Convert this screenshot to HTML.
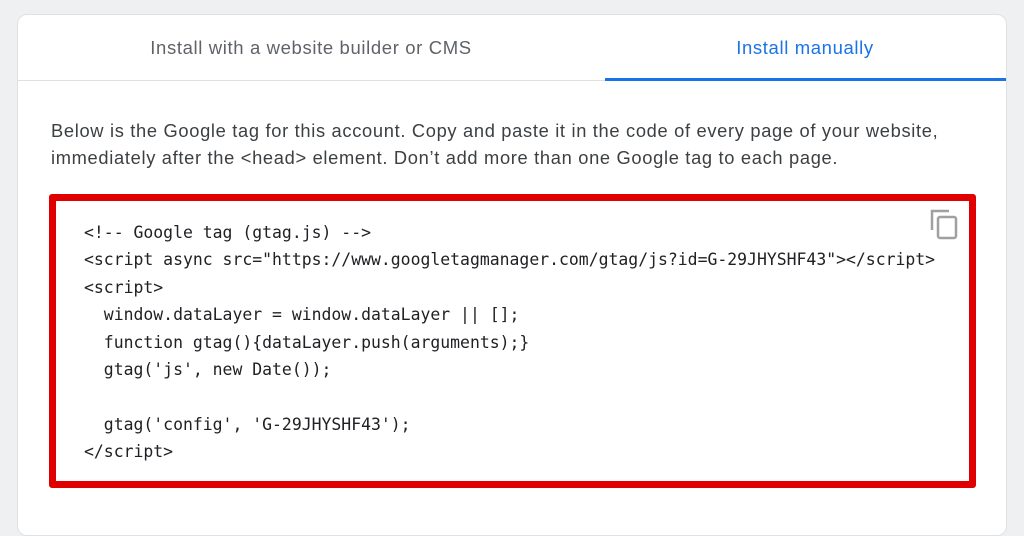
<!DOCTYPE html>
<html><head><style>
body{margin:0;width:1024px;height:507px;background:#eef0f2;font-family:"Liberation Sans",sans-serif;overflow:hidden;position:relative}
.card{position:absolute;left:17px;top:14px;width:988px;height:520px;background:#fff;border:1px solid #dfe1e5;border-radius:10px}
.tab{position:absolute;top:0;height:66px;line-height:66px;text-align:center;font-size:18.5px;letter-spacing:0.63px}
.t1{left:0;width:586px;color:#5f6368}
.t2{left:586px;width:402px;color:#1a73e8}
.line{position:absolute;left:0;right:0;top:65px;height:1px;background:#e0e0e0}
.ul{position:absolute;left:587px;right:0;top:63px;height:3px;background:#1a73e8}
.desc{position:absolute;left:33px;top:102px;width:960px;font-size:18.3px;letter-spacing:0.68px;line-height:27px;color:#3c4043;white-space:nowrap}
.red{position:absolute;left:49px;top:194px;width:913px;height:280px;border:7px solid #e00000;border-radius:3px}
pre{position:absolute;left:84px;top:219px;margin:0;font-family:"DejaVu Sans Mono","Liberation Mono",monospace;font-size:16.45px;line-height:27.4px;color:#202124}
</style></head><body>
<div class="card">
<div class="tab t1">Install with a website builder or CMS</div>
<div class="tab t2">Install manually</div>
<div class="line"></div><div class="ul"></div>
<div class="desc">Below is the Google tag for this account. Copy and paste it in the code of every page of your website,<br>immediately after the &lt;head&gt; element. Don’t add more than one Google tag to each page.</div>
</div>
<div class="red"></div>
<pre>&lt;!-- Google tag (gtag.js) --&gt;
&lt;script async src="https://www.googletagmanager.com/gtag/js?id=G-29JHYSHF43"&gt;&lt;/script&gt;
&lt;script&gt;
  window.dataLayer = window.dataLayer || [];
  function gtag(){dataLayer.push(arguments);}
  gtag('js', new Date());

  gtag('config', 'G-29JHYSHF43');
&lt;/script&gt;</pre>
<svg style="position:absolute;left:929px;top:208px" width="30" height="32" viewBox="0 0 30 32">
<path d="M3 22V3h17" fill="none" stroke="#a0a0a0" stroke-width="2.5"/>
<rect x="9" y="9" width="18" height="21" rx="2" fill="none" stroke="#a0a0a0" stroke-width="2.5"/>
</svg>
</body></html>
